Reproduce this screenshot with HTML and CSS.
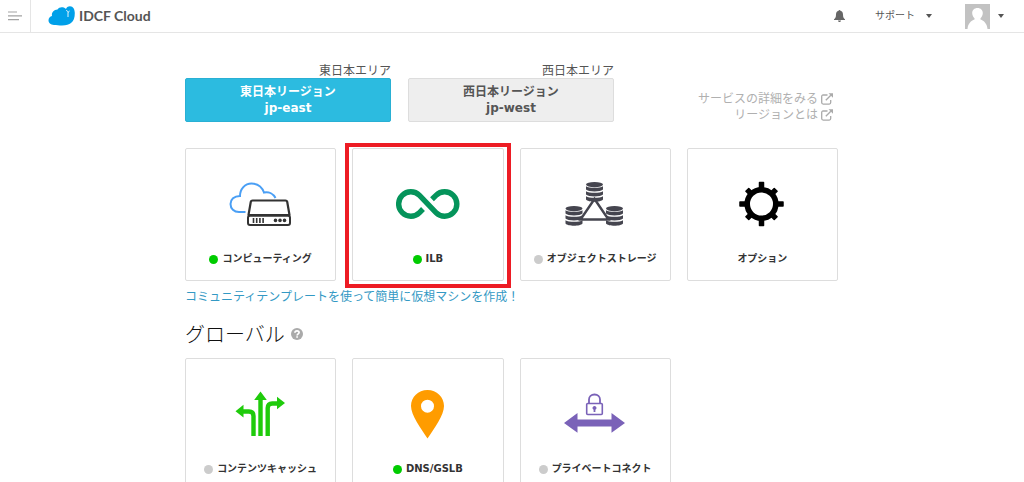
FILE: index.html
```
<!DOCTYPE html>
<html lang="ja">
<head>
<meta charset="UTF-8">
<meta name="viewport" content="width=device-width, initial-scale=1.0">
<title>IDCF Cloud</title>
<link rel="stylesheet" href="styles.css">
</head>
<body>
<header class="header">
  <button class="menu-btn" type="button" aria-label="メニュー">
    <svg width="14" height="10" viewBox="0 0 14 10" stroke="#a3a3a3" stroke-width="1.2"><path d="M0 1h9M0 4.800h14M0 8.600h11"/></svg>
  </button>
  <a class="logo" href="#">
    <svg width="27" height="20" viewBox="0 0 27 20">
      <path fill="#00a0e9" d="M6 19C2.500 19 .5 16.800.5 14.300.5 12 2 10.300 4 10 3.200 6.500 6 3.500 9.500 3.500c1.200-1.800 3.300-2.700 5.200-2.200 1.500.3 2.700 1 3.300 1.800C18.300 1.200 20 .2 22 .2c3.200 0 4.800 3 4.800 6.800 0 4.500-1 8-3.800 10-2 1.600-4.500 2.500-9 2.500C11 19.500 8.500 19 6 19z"/>
      <path fill="none" stroke="#fff" stroke-width=".9" d="M20 11V6.500c0-1-.5-1.800-1.800-2M20 6.500l1.600-1.500"/>
    </svg>
    <span>IDCF Cloud</span>
  </a>
  <nav class="header-nav">
    <button class="bell" type="button" aria-label="お知らせ">
      <svg width="11" height="12" viewBox="0 0 11 12" fill="#666"><path d="M5.500 0c.6 0 .9.300.9.800C8.200 1.200 9 2.700 9 4.500c0 2.500.6 3.800 2 4.700v.8H0v-.8c1.400-.9 2-2.200 2-4.700C2 2.700 2.800 1.200 4.600.8c0-.5.3-.8.900-.8zM4 10.500h3c0 .9-.6 1.500-1.500 1.500S4 11.400 4 10.500z"/></svg>
    </button>
    <button class="support" type="button">サポート <span class="caret"></span></button>
    <button class="user" type="button" aria-label="アカウント">
      <svg width="25" height="25" viewBox="0 0 25 25"><path fill="#c2c2c2" d="M0 0h25v25H0z"/><path fill="#fff" d="M12.500 4c3.300 0 5.300 2.200 5.300 5 0 2-1 4.200-2.300 5.300v1.200c3.500 1.200 6.500 4 7 9.500h-20c.5-5.500 3.500-8.300 7-9.500v-1.200C8.200 13.200 7.200 11 7.200 9c0-2.800 2-5 5.300-5z"/></svg>
      <span class="caret"></span>
    </button>
  </nav>
</header>

<main class="container">
  <section class="regions">
    <div class="region">
      <div class="area">東日本エリア</div>
      <button class="region-btn active" type="button">東日本リージョン<br>jp-east</button>
    </div>
    <div class="region">
      <div class="area">西日本エリア</div>
      <button class="region-btn" type="button">西日本リージョン<br>jp-west</button>
    </div>
    <div class="region-links">
      <a href="#">サービスの詳細をみる <svg width="12" height="12" viewBox="0 0 12 12"><path fill="none" stroke="#aaa" stroke-width="1.300" d="M6.500 2H2.200C1.200 2 .7 2.500.7 3.400v6.200c0 .9.500 1.500 1.500 1.500h6c1 0 1.500-.6 1.500-1.500V7M4.800 7.200l5-5"/><path fill="#aaa" d="M7.500.2H12v4.500z"/></svg></a>
      <a href="#">リージョンとは <svg width="12" height="12" viewBox="0 0 12 12"><path fill="none" stroke="#aaa" stroke-width="1.300" d="M6.500 2H2.200C1.200 2 .7 2.500.7 3.400v6.200c0 .9.500 1.500 1.500 1.500h6c1 0 1.500-.6 1.500-1.500V7M4.800 7.200l5-5"/><path fill="#aaa" d="M7.500.2H12v4.500z"/></svg></a>
    </div>
  </section>

  <section class="cards">
    <a class="card" href="#">
      <svg class="icon" width="64" height="56" viewBox="0 0 64 56">
        <path fill="none" stroke="#4a9ff5" stroke-width="2" d="M16.500 36H10C5 36 1.500 32.500 1.500 28c0-4.500 3.500-8 9.500-8C11 13 16 7.500 22.500 7.500c6 0 10.500 3.500 12.500 9 5-1 9.500 1.500 11.500 5.500"/>
        <path fill="#fff" stroke="#333" stroke-width="2.200" stroke-linejoin="round" d="M23.500 24.500h33c1 0 1.500.4 1.700 1.300L60.500 39h-41l2.300-13.200c.2-.9.7-1.300 1.700-1.300z"/>
        <rect x="19" y="39.800" width="42" height="9.200" rx="2" fill="#fff" stroke="#333" stroke-width="2"/>
        <path stroke="#333" stroke-width="1.600" d="M24.500 42v5M27.700 42v5M30.900 42v5M34.100 42v5"/>
        <g fill="#333"><circle cx="46.500" cy="44.400" r="1.800"/><circle cx="51" cy="44.400" r="1.800"/><circle cx="55.500" cy="44.400" r="1.800"/></g>
      </svg>
      <span class="name"><i class="dot on"></i>コンピューティング</span>
    </a>
    <a class="card selected" href="#">
      <svg class="icon" width="64" height="56" viewBox="0 0 64 56">
        <path fill="none" stroke="#05945b" stroke-width="5.400" d="M27 33L23.500 36.600A12.200 12.200 0 1 1 23.500 19.400L40 36.600A12.200 12.200 0 1 0 40 19.400L36 23.300"/>
      </svg>
      <span class="name"><i class="dot on"></i>ILB</span>
    </a>
    <a class="card" href="#">
      <svg class="icon" width="64" height="56" viewBox="0 0 64 56">
        <defs>
          <g id="disks">
            <ellipse cx="8.500" cy="2.600" rx="8.500" ry="2.600"/>
            <path d="M0 4.200c3 2.200 14 2.200 17 0v3.300c-2 2.600-15 2.600-17 0zM0 9.200c3 2.200 14 2.200 17 0v3.300c-2 2.600-15 2.600-17 0zM0 14.200c3 2.200 14 2.200 17 0v3.300c-2 3-15 3-17 0z"/>
          </g>
        </defs>
        <path fill="none" stroke="#45454f" stroke-width="2.400" d="M31.500 23L17.500 43.500h28z"/>
        <g fill="#45454f"><use href="#disks" x="23" y="6"/><use href="#disks" x="2.500" y="30"/><use href="#disks" x="43" y="30"/></g>
      </svg>
      <span class="name"><i class="dot"></i>オブジェクトストレージ</span>
    </a>
    <a class="card" href="#">
      <svg class="icon" width="64" height="56" viewBox="0 0 64 56">
        <circle cx="31.500" cy="28" r="14.300" fill="none" stroke="#000" stroke-width="5.600"/>
        <g stroke="#000" stroke-width="1.500" stroke-linejoin="round">
          <path d="M29.500 6.500h4V13h-4zM29.500 43h4v6.500h-4zM10 26h6.500v4H10zM46.500 26H53v4h-6.500z"/>
          <path transform="rotate(45 31.500 28)" d="M29.500 8h4v5h-4zM29.500 43h4v5h-4zM11.500 26h5v4h-5zM46.500 26h5v4h-5z"/>
        </g>
      </svg>
      <span class="name">オプション</span>
    </a>
  </section>
  <a class="community" href="#">コミュニティテンプレートを使って簡単に仮想マシンを作成！</a>

  <h2 class="title">グローバル
    <svg width="12" height="12" viewBox="0 0 12 12"><circle cx="6" cy="6" r="6" fill="#aaa"/><path fill="none" stroke="#fff" stroke-width="1.700" d="M3.900 4.700C4 3.400 4.800 2.800 6 2.800c1.300 0 2.100.7 2.100 1.700C8.100 5.800 6.100 5.900 6.100 7.500M6.100 8.200v1.600"/></svg>
  </h2>
  <section class="cards">
    <a class="card" href="#">
      <svg class="icon" width="64" height="56" viewBox="0 0 64 56">
        <path fill="none" stroke="#1fcb0b" stroke-width="4.400" d="M31.500 50V12M24.500 50V30c0-3-1.500-4.500-4.500-4.500H13M38.700 50V22c0-3 1.500-4.500 4.500-4.500H49"/>
        <path fill="#1fcb0b" d="M31.500 5.500l6.300 8.500H25.200zM6.500 25.200l8-6.400v12.800zM56 17l-8-6.200v12.400z"/>
      </svg>
      <span class="name"><i class="dot"></i>コンテンツキャッシュ</span>
    </a>
    <a class="card" href="#">
      <svg class="icon" width="64" height="56" viewBox="0 0 64 56">
        <path fill="#ff9c00" fill-rule="evenodd" d="M31.500 4C40.800 4 48 11 48 20c0 9-9.500 22-16.500 32.500C24.500 42 15 29 15 20 15 11 22.200 4 31.500 4zm0 9.700a6.500 6.500 0 1 0 0 13 6.500 6.500 0 0 0 0-13z"/>
      </svg>
      <span class="name"><i class="dot on"></i>DNS/GSLB</span>
    </a>
    <a class="card" href="#">
      <svg class="icon" width="64" height="56" viewBox="0 0 64 56">
        <path fill="#7a62b8" d="M1 37l13.500-10v6.500h34V27L62 37l-13.500 9.700v-6.200h-34v6.200z"/>
        <rect x="23.700" y="17.500" width="15.600" height="11" rx="1" fill="none" stroke="#7a62b8" stroke-width="1.600"/>
        <path fill="none" stroke="#7a62b8" stroke-width="1.800" d="M26 17v-3.500c0-3 2.300-5 5.500-5s5.500 2 5.500 5V17"/>
        <path fill="#7a62b8" d="M31.500 20a2 2 0 0 1 .9 3.800V26h-1.800v-2.200a2 2 0 0 1 .9-3.800z"/>
      </svg>
      <span class="name"><i class="dot"></i>プライベートコネクト</span>
    </a>
  </section>
</main>
</body>
</html>
```

FILE: styles.css
```
* {
  box-sizing: border-box;
}
body {
  margin: 0;
  background: #fff;
  color: #555;
  font-family: "DejaVu Sans", "Noto Sans CJK JP", sans-serif;
  font-size: 12px;
  line-height: 16px;
}
a {
  text-decoration: none;
}
button {
  margin: 0;
  padding: 0;
  border: 0;
  background: none;
  color: inherit;
  font: inherit;
  cursor: pointer;
}
svg {
  flex: none;
}

/* header */
.header {
  display: flex;
  align-items: center;
  height: 33px;
  border-bottom: 1px solid #e5e5e5;
}
.menu-btn {
  display: flex;
  align-items: center;
  height: 32px;
  padding: 0 8px;
  border-right: 1px solid #e5e5e5;
}
.logo {
  display: flex;
  align-items: center;
  gap: 4px;
  margin-left: 17px;
  color: #555;
  font-family: Lato, sans-serif;
  font-size: 14px;
  font-weight: bold;
}
.header-nav {
  display: flex;
  align-items: center;
  margin-left: auto;
  padding-right: 20px;
}
.bell,
.support,
.user {
  display: flex;
  align-items: center;
}
.support {
  gap: 11px;
  margin: 0 33px 0 30px;
  font-size: 10px;
}
.user {
  gap: 8px;
}
.caret {
  border: 3px solid transparent;
  border-top: 4px solid #555;
  border-bottom: 0;
}

/* regions */
.container {
  max-width: 654px;
  margin: 0 auto;
  padding: 29px 1px 0 0;
}
.regions {
  display: flex;
  gap: 17px;
}
.region {
  flex: 0 1 206px;
}
.area {
  font-family: "Noto Sans CJK JP", sans-serif;
  text-align: right;
}
.region-btn {
  width: 100%;
  height: 44px;
  border: 1px solid #ddd;
  border-radius: 2px;
  background: #eee;
  font-weight: bold;
}
.region-btn.active {
  border-color: #29b0d4;
  background: #2cbbe0;
  color: #fff;
}
.region-links {
  display: flex;
  flex-direction: column;
  align-items: flex-end;
  margin-left: auto;
  padding: 29px 5px 0 0;
}
.region-links a {
  display: flex;
  align-items: center;
  gap: 3px;
  color: #b0b0b0;
}

/* service cards */
.cards {
  display: grid;
  grid-template-columns: repeat(4, 1fr);
  gap: 16px;
}
.regions + .cards {
  margin-top: 25px;
}
.card {
  position: relative;
  display: flex;
  flex-direction: column;
  align-items: center;
  height: 133px;
  padding-top: 27px;
  border: 1px solid #ddd;
  border-radius: 2px;
  color: #333;
}
.card.selected::after {
  content: "";
  position: absolute;
  inset: -6px -8px -8px -8px;
  border: 4px solid #ed1c24;
}
.name {
  display: flex;
  align-items: center;
  gap: 4px;
  margin-top: 19px;
  font-size: 10px;
  font-weight: bold;
}
.dot {
  width: 9px;
  height: 9px;
  border-radius: 50%;
  background: #ccc;
}
.dot.on {
  background: #0c0;
}
.community {
  display: block;
  margin-top: 8px;
  color: #3399c4;
}
.title {
  display: flex;
  align-items: center;
  gap: 6px;
  margin: 15px 0 10px;
  color: #111;
  font-family: "Noto Sans CJK JP", sans-serif;
  font-size: 20px;
  font-weight: 300;
  line-height: 28px;
}
```
